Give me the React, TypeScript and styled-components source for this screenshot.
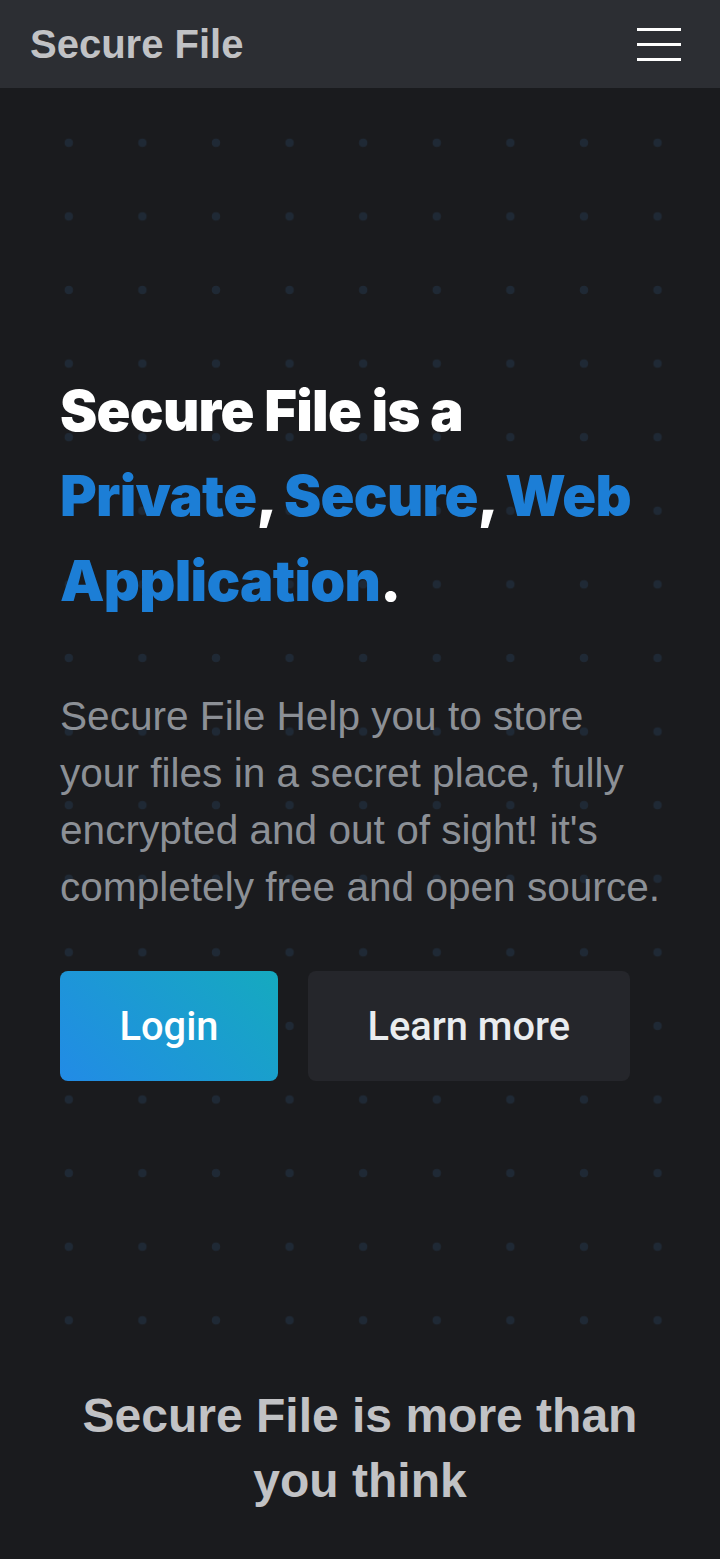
import React from 'react';
import styled, { createGlobalStyle } from 'styled-components';

const GlobalStyle = createGlobalStyle`
  html, body {
    margin: 0;
    padding: 0;
    background-color: #1a1b1e;
  }

  * {
    box-sizing: border-box;
  }
`;

const Page = styled.div`
  min-height: 1559px;
  background-color: #1a1b1e;
  font-family: "Liberation Sans", Arial, sans-serif;
`;

const Header = styled.header`
  display: flex;
  align-items: center;
  justify-content: space-between;
  height: 88px;
  padding: 0 30px;
  background-color: #2c2e33;
`;

const Logo = styled.div`
  font-size: 40px;
  font-weight: 700;
  color: #c1c2c5;
`;

const Burger = styled.button`
  display: flex;
  flex-direction: column;
  gap: 12px;
  padding: 9px;
  background: none;
  border: 0;
  cursor: pointer;
`;

const BurgerLine = styled.span`
  display: block;
  width: 44px;
  height: 3px;
  background-color: #ffffff;
`;

const Hero = styled.section`
  padding: 18px 25px 0 32px;
`;

const DotField = styled.div`
  height: 1255px;
  padding: 263px 0 0 28px;
  background-image: radial-gradient(circle, #1f2935 4px, transparent 4.6px);
  background-size: 73.6px 73.6px;
`;

const Content = styled.div`
  max-width: 604px;
`;

const Title = styled.h1`
  margin: 0;
  font-family: Inter, "Liberation Sans", sans-serif;
  font-size: 56px;
  font-weight: 900;
  line-height: 85px;
  letter-spacing: -0.7px;
  color: #ffffff;
`;

const Highlight = styled.span`
  color: #1c7ed6;
`;

const Description = styled.p`
  margin: 64px 0 0;
  font-size: 40.6px;
  line-height: 57px;
  color: #8c9096;
`;

const Actions = styled.div`
  display: flex;
  gap: 30px;
  margin-top: 55px;
`;

const ActionButton = styled.button<{ $primary?: boolean }>`
  height: 110px;
  padding: 0 59.5px;
  border: 0;
  border-radius: 8px;
  font-family: Roboto, "Liberation Sans", sans-serif;
  font-size: 39.8px;
  font-weight: 500;
  color: ${(p) => (p.$primary ? '#ffffff' : '#e9ecef')};
  background: ${(p) => (p.$primary ? 'linear-gradient(45deg, #228be6 0%, #15aabf 100%)' : '#25262b')};
  cursor: pointer;
`;

const Features = styled.section`
  padding: 22px 40px 0;
  text-align: center;
`;

const FeaturesTitle = styled.h2`
  margin: 0;
  font-size: 48px;
  font-weight: 700;
  line-height: 65px;
  color: #c1c2c5;
`;

export default function App() {
  return (
    <Page>
      <GlobalStyle/>
      <Header>
        <Logo>Secure File</Logo>
        <Burger aria-label="Open navigation">
          <BurgerLine/>
          <BurgerLine/>
          <BurgerLine/>
        </Burger>
      </Header>
      <Hero>
        <DotField>
          <Content>
            <Title>
              Secure File is a <Highlight>Private</Highlight>, <Highlight>Secure</Highlight>,{' '}
              <Highlight>Web Application</Highlight>.
            </Title>
            <Description>
              Secure File Help you to store your files in a secret place, fully encrypted and out of sight! it's
              completely free and open source.
            </Description>
            <Actions>
              <ActionButton $primary>Login</ActionButton>
              <ActionButton>Learn more</ActionButton>
            </Actions>
          </Content>
        </DotField>
      </Hero>
      <Features>
        <FeaturesTitle>Secure File is more than you think</FeaturesTitle>
      </Features>
    </Page>
  );
}
